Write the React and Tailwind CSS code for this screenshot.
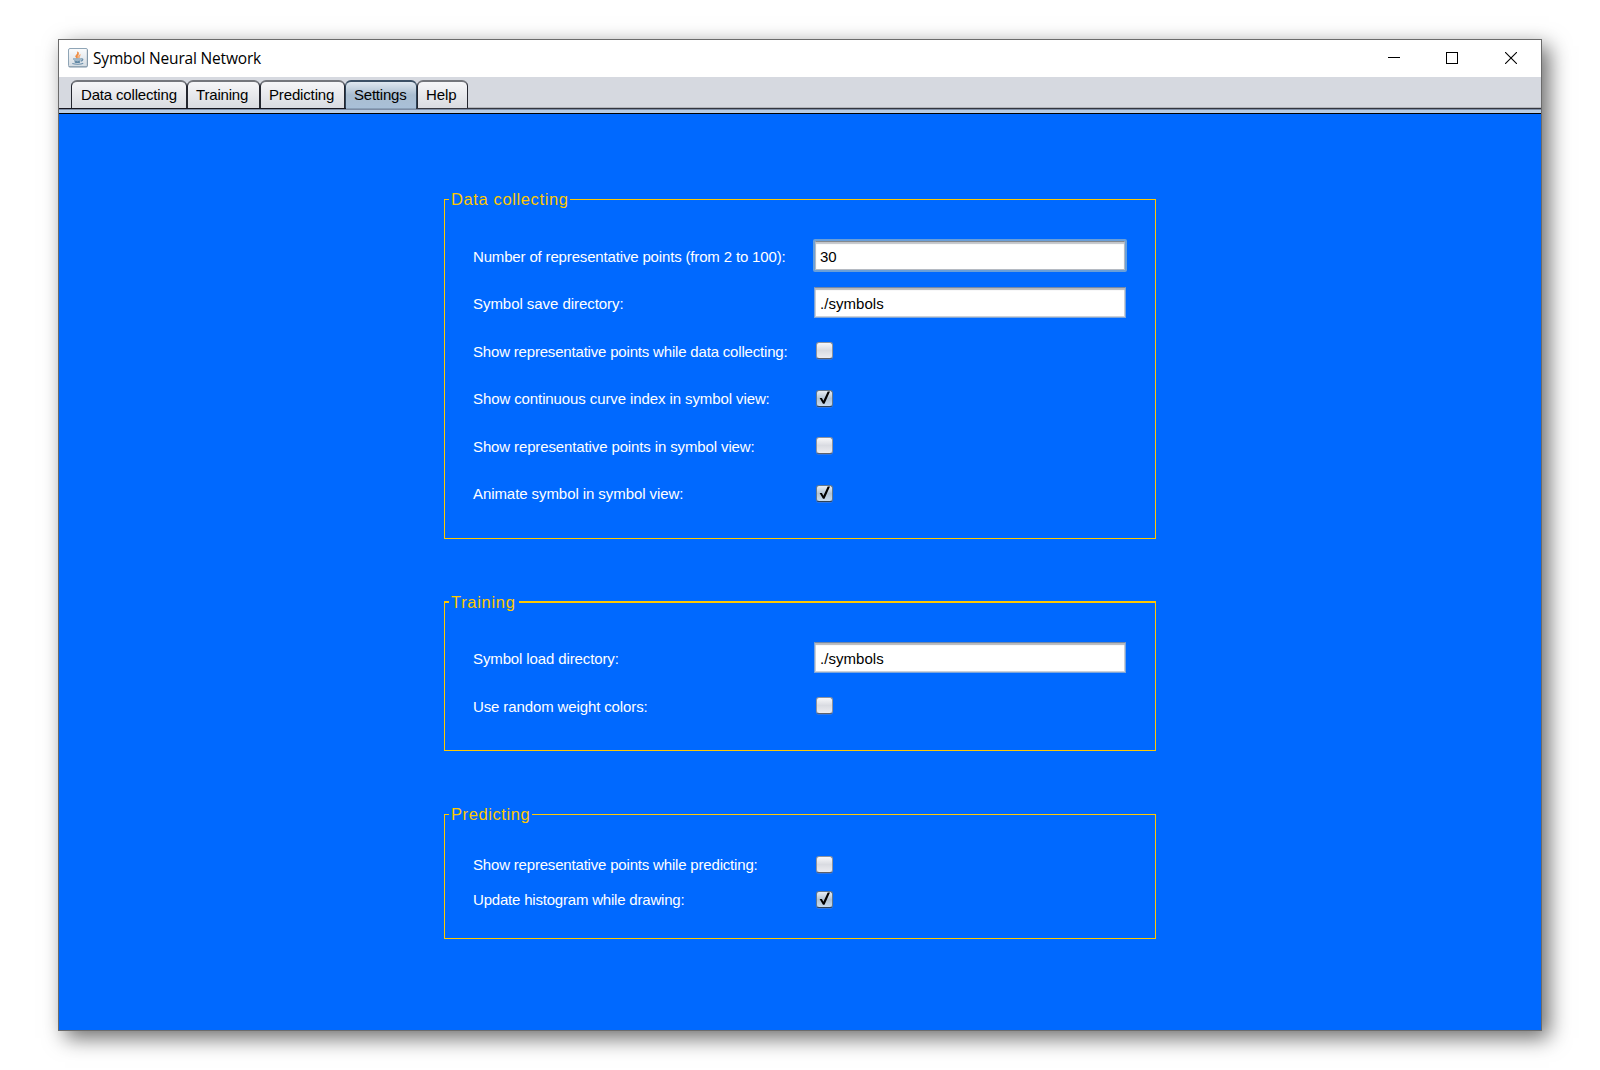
import React from "react";

const TABS = [
  { label: "Data collecting", box: "w-[116px] pl-[9px]", spacing: "tracking-[-0.170px]" },
  { label: "Training", box: "w-[73px] pl-[8px]", spacing: "tracking-[-0.180px]" },
  { label: "Predicting", box: "w-[85px] pl-[8px]", spacing: "tracking-[-0.150px]" },
  { label: "Settings", box: "w-[72px] pl-[8px]", spacing: "tracking-[-0.220px]", active: true },
  { label: "Help", box: "w-[51px] pl-[8px]", spacing: "tracking-[-0.1px]" },
];

function JavaIcon() {
  return (
    <svg width="20" height="20" viewBox="0 0 20 20" className="shrink-0">
      <defs>
        <linearGradient id="tile" x1="0" y1="0" x2="0" y2="1">
          <stop offset="0" stopColor="#fbfcfd" />
          <stop offset="1" stopColor="#d3dbe2" />
        </linearGradient>
      </defs>
      <rect x="0.5" y="0.5" width="19" height="18.5" rx="1.5" fill="url(#tile)" stroke="#8fa5b6" />
      <path d="M.8 18.700h18.400M19.300 2v16" stroke="#7f93a4" strokeWidth=".8" />
      <path d="M8.800 10C5.800 8 10.400 6.600 9.600 3.800 12 6.200 8.600 7.600 9.400 10Z" fill="#f08a3c" stroke="#ee8a40" strokeWidth=".9" />
      <path d="M10.700 10c-.8-1.800.2-2.700 1.600-3.400-.4 1.400-1 1.900-1 3.200Z" fill="#f3a468" stroke="#f3a468" strokeWidth=".7" />
      <path d="M5 11h8.500M6.200 12.700c2 .6 4.500.6 6.300 0M6.800 14.200c1.700.4 3.600.4 5.200 0" fill="none" stroke="#5f86a3" strokeWidth="1.200" />
      <path d="M13.300 10.900c2.200-.4 2 1.600-.4 2.200M4.300 15.500c3 1.100 8.600 1 10.900-.2" fill="none" stroke="#6b8fab" strokeWidth="1.100" />
    </svg>
  );
}

function TitleBar() {
  return (
    <header className="flex h-[37px] items-start bg-white text-black">
      <div className="flex pl-[9px] pt-[8px]">
        <JavaIcon />
        <h1 className="ml-[5px] whitespace-nowrap font-['Open_Sans',sans-serif] text-[15.500px] leading-[21px] tracking-[-0.180px]">
          Symbol Neural Network
        </h1>
      </div>
      <svg width="12" height="12" className="ml-auto mr-[46px] mt-[12px]" shapeRendering="crispEdges">
        <path d="M0 5.500h12" stroke="#000" />
      </svg>
      <svg width="12" height="12" className="mr-[47px] mt-[12px]" shapeRendering="crispEdges">
        <rect x=".5" y=".5" width="11" height="11" fill="none" stroke="#000" />
      </svg>
      <svg width="12" height="12" className="mr-[24px] mt-[12px]">
        <path d="M0 0l12 12M12 0L0 12" stroke="#000" strokeWidth="1.100" />
      </svg>
    </header>
  );
}

function Tab({ label, box, spacing, active }) {
  return (
    <div
      className={
        "h-[28px] shrink-0 whitespace-nowrap rounded-t-[6px] border border-t-2 border-b-0 pt-[1px] text-[15px] leading-[24px] text-black " +
        box + " " + spacing + " " +
        (active
          ? "border-[#2d4257] border-t-[#3b5065] bg-linear-to-b from-[#dfe8f0] via-[#a9bdd0] to-[#a9c0d8]"
          : "border-x-[#24262f] border-t-[#74767c] bg-linear-to-b from-[#f6f6f8] to-[#d9dbe1]")
      }
    >
      {label}
    </div>
  );
}

function TabStrip() {
  return (
    <nav className="h-[37px] bg-[#d6d9e0] pt-[3px]">
      <div className="relative z-10 flex h-[28px] pl-[12px]">
        {TABS.map((t) => (
          <Tab key={t.label} {...t} />
        ))}
        <div className="flex flex-1 flex-col justify-end">
          <div className="h-px bg-[#b3b5bb]" />
        </div>
      </div>
      <div className="flex h-px">
        <div className="w-[287px] bg-[#14141e]" />
        <div className="w-[70px] bg-[#8aa0b8]" />
        <div className="flex-1 bg-[#33353f]" />
      </div>
      <div className="h-px bg-[#7d8ca4]" />
      <div className="h-[3px] bg-[#b9cde4]" />
      <div className="h-px bg-black" />
    </nav>
  );
}

function CheckBox({ checked, low }) {
  return (
    <span
      className={
        "ml-[2px] block h-[17px] w-[17px] rounded-[3px] border shadow-[0_1px_0_rgba(60,120,220,0.8)] " +
        (checked || low ? "mt-[8px] " : "mt-[7px] ") +
        (checked
          ? "border-[#63788d] border-b-[#2f4357] bg-linear-to-b from-[#e8eef4] via-[#b2c3d3] to-[#c8dbee]"
          : "border-[#8f939c] border-b-[#5d6069] bg-linear-to-b from-[#f8f8fa] via-[#d9dbe1] to-[#ececf0]")
      }
    >
      {checked && (
        <svg width="15" height="15" viewBox="0 0 15 15">
          <path d="M2.600 7h2.300l1.500 2.700L10.700.6h2.300L7.500 12.700H6Z" fill="#000" />
        </svg>
      )}
    </span>
  );
}

function TextField({ value, focused }) {
  return focused ? (
    <div className="mt-[-1px] h-[33px] w-[314px] -ml-px rounded-[2px] border-2 border-[#6a9fd8]">
      <div className="h-full border border-[#b5bac2] border-t-[#84898f] bg-white pl-[4px] text-[15px] leading-[29px] tracking-[-0.2px] text-black shadow-[inset_0_2px_1px_#c4c6ca]">
        {value}
      </div>
    </div>
  ) : (
    <div className="h-[31px] w-[312px] border border-[#7aa5dc] border-t-[#7488a6] bg-white pl-[5px] text-[15px] leading-[32px] tracking-[0.050px] text-black shadow-[inset_0_2px_1px_#b6b8bc,inset_0_0_0_1px_#cfd1d5]">
      {value}
    </div>
  );
}

function Row({ label, spacing, className, children }) {
  return (
    <div className={"flex h-[34px] " + className}>
      <label className={"w-[341px] whitespace-nowrap text-[15px] leading-[34px] text-white " + spacing}>
        {label}
      </label>
      {children}
    </div>
  );
}

function Group({ title, spacing, thick, titleBox, className, bodyClass, children }) {
  const line = thick ? "h-[2px] bg-[#ffc800]" : "h-px bg-[#ffc800]";
  return (
    <section className={"flex w-[712px] flex-col " + className}>
      <div className={"flex items-center " + (thick ? "h-[2px]" : "h-px")}>
        <div className={"w-[5px] " + line} />
        <h2
          className={
            "whitespace-nowrap pl-[2px] text-[16.500px] leading-[18px] text-[#ffc800] " +
            (thick ? "" : "-mt-[2px] ") + titleBox + " " + spacing
          }
        >
          {title}
        </h2>
        <div className={"flex-1 " + line} />
      </div>
      <div className={"flex-1 border border-t-0 border-[#ffc800] pl-[28px] " + bodyClass}>{children}</div>
    </section>
  );
}

export default function App() {
  return (
    <div className="h-[1070px] w-[1600px] overflow-hidden bg-white pl-[58px] pt-[39px] font-['Liberation_Sans',Arial,sans-serif]">
      <main className="flex h-[992px] w-[1484px] flex-col border border-[#6b6b6b] shadow-[7px_7px_20px_rgba(0,0,0,0.58)]">
        <TitleBar />
        <TabStrip />
        <div className="flex-1 bg-[#0069ff] pl-[385px] pt-[85px]">
          <Group title="Data collecting" titleBox="w-[121px]" spacing="tracking-[0.620px]" className="h-[340px]" bodyClass="pt-[40px]">
            <Row label="Number of representative points (from 2 to 100):" spacing="tracking-[-0.160px]" className="">
              <TextField value="30" focused />
            </Row>
            <Row label="Symbol save directory:" spacing="tracking-[-0.050px]" className="mt-[13px]">
              <TextField value="./symbols" />
            </Row>
            <Row label="Show representative points while data collecting:" spacing="tracking-[-0.185px]" className="mt-[14px]">
              <CheckBox />
            </Row>
            <Row label="Show continuous curve index in symbol view:" spacing="tracking-[-0.100px]" className="mt-[13px]">
              <CheckBox checked />
            </Row>
            <Row label="Show representative points in symbol view:" spacing="tracking-[-0.125px]" className="mt-[14px]">
              <CheckBox />
            </Row>
            <Row label="Animate symbol in symbol view:" spacing="tracking-[-0.075px]" className="mt-[13px]">
              <CheckBox checked />
            </Row>
          </Group>
          <Group title="Training" thick titleBox="w-[70px]" spacing="tracking-[0.7px]" className="mt-[62px] h-[150px]" bodyClass="pt-[39px]">
            <Row label="Symbol load directory:" spacing="tracking-[-0.120px]" className="">
              <TextField value="./symbols" />
            </Row>
            <Row label="Use random weight colors:" spacing="tracking-[-0.120px]" className="mt-[14px]">
              <CheckBox />
            </Row>
          </Group>
          <Group title="Predicting" titleBox="w-[83px]" spacing="tracking-[0.6px]" className="mt-[63px] h-[125px]" bodyClass="pt-[33px]">
            <Row label="Show representative points while predicting:" spacing="tracking-[-0.185px]" className="">
              <CheckBox low />
            </Row>
            <Row label="Update histogram while drawing:" spacing="tracking-[-0.200px]" className="mt-[1px]">
              <CheckBox checked />
            </Row>
          </Group>
        </div>
      </main>
    </div>
  );
}
